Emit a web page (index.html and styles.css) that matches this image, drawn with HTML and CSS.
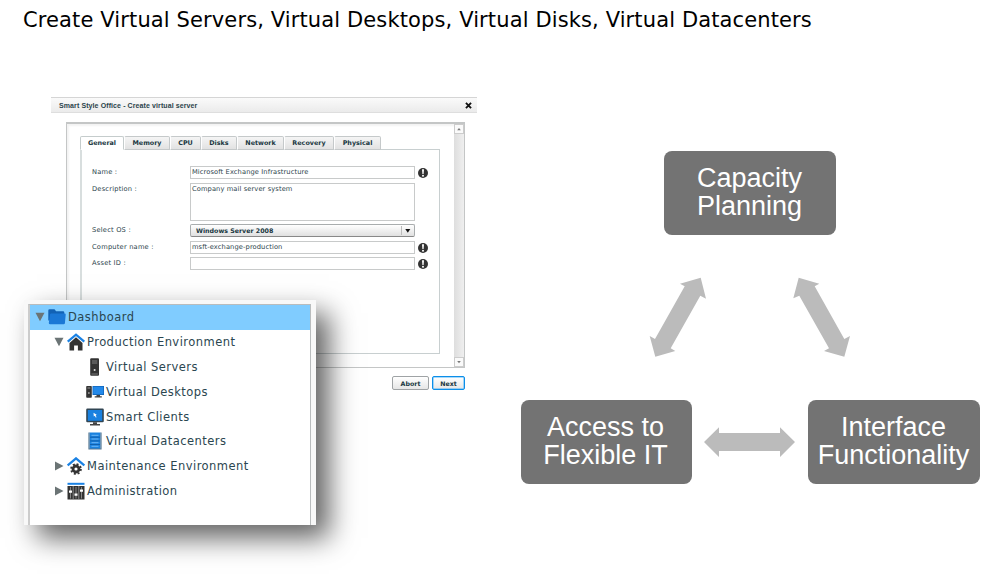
FILE: index.html
```html
<!DOCTYPE html>
<html lang="en">
<head>
<meta charset="utf-8">
<title>Create Virtual Servers</title>
<link rel="stylesheet" href="styles.css">
</head>
<body>
<main class="slide">
  <h1 class="headline">Create Virtual Servers, Virtual Desktops, Virtual Disks, Virtual Datacenters</h1>

  <section class="dialog">
    <header class="dialog-bar">
      <span class="dialog-title">Smart Style Office - Create virtual server</span>
      <svg class="close" viewBox="0 0 6 6"><path d="M.8.8 5.2 5.2M5.2.8.8 5.2"/></svg>
    </header>
    <div class="frame">
      <div class="content">
        <nav class="tabs">
          <span class="tab active t1">General</span><span class="tab t2">Memory</span><span class="tab t3">CPU</span><span class="tab t4">Disks</span><span class="tab t5">Network</span><span class="tab t6">Recovery</span><span class="tab t7">Physical</span>
        </nav>
        <div class="form">
          <label>Name :</label><div class="field">Microsoft Exchange Infrastructure</div>
          <svg class="alert" viewBox="0 0 10 10"><circle cx="5" cy="5" r="5"/><path d="M4 1.3h2L5.6 6H4.4z"/><circle class="dot" cx="5" cy="7.8" r="1"/></svg>
          <label>Description :</label><div class="field area">Company mail server system</div><i></i>
          <label>Select OS :</label><div class="select"><span>Windows Server 2008</span><svg class="caret" viewBox="0 0 13 11"><path class="sep" d="M.5 1v9"/><path d="M4.300 4h5L6.800 7.800z"/></svg></div><i></i>
          <label>Computer name :</label><div class="field">msft-exchange-production</div>
          <svg class="alert" viewBox="0 0 10 10"><circle cx="5" cy="5" r="5"/><path d="M4 1.3h2L5.6 6H4.4z"/><circle class="dot" cx="5" cy="7.8" r="1"/></svg>
          <label>Asset ID :</label><div class="field"></div>
          <svg class="alert" viewBox="0 0 10 10"><circle cx="5" cy="5" r="5"/><path d="M4 1.3h2L5.600 6H4.400z"/><circle class="dot" cx="5" cy="7.800" r="1"/></svg>
        </div>
      </div>
      <div class="scroll">
        <svg viewBox="1 1 8 8"><path d="M3.200 6.200h3.600L5 4z"/></svg>
        <svg viewBox="1 1 8 8"><path d="M3.200 4h3.600L5 6.200z"/></svg>
      </div>
    </div>
    <footer class="actions"><button class="btn">Abort</button><button class="btn primary">Next</button></footer>
  </section>

  <section class="tree">
    <ul class="list">
      <li class="row selected"><svg class="tw" viewBox="0 0 10 10"><path d="M.5.8h9L5 9.300z"/></svg>
        <svg class="ic" viewBox="0 0 18 18"><path d="M.3 2.500q0-1.300 1.200-1.300h5l1.600 2h7q1.200 0 1.200 1.200v8H.3z" fill="#1262b5"/><path d="M2 6.500q.2-1 1.200-1h13.500q1.200 0 1 1.200l-.8 8.500q-.1 1.100-1.300 1.100H2.200Q.7 16.300.8 15z" fill="#1b78d6"/></svg><span>Dashboard</span></li>
      <li class="row l1"><svg class="tw" viewBox="0 0 10 10"><path d="M.5.8h9L5 9.300z"/></svg>
        <svg class="ic" viewBox="0 0 18 18"><path d="M2.500 10 9 4.300 15.500 10v7.500h-4.600v-5H7.100v5H2.500z" fill="#333"/><path d="M.7 8.700 9 1.700l8.300 7" fill="none" stroke="#1b82e4" stroke-width="2.300"/></svg><span>Production Environment</span></li>
      <li class="row l2"><svg class="ic" viewBox="0 0 18 18"><rect x="4.200" y=".3" width="8.800" height="17.400" rx="1" fill="#333"/><path d="M6 3h5.300M6 5h5.300" stroke="#888" stroke-width=".9"/><circle cx="8.600" cy="12" r="1" fill="#ddd"/><path d="M5.500 16h6.300" stroke="#777"/></svg><span>Virtual Servers</span></li>
      <li class="row l2"><svg class="ic" viewBox="0 0 18 18"><rect x=".2" y="3" width="5.600" height="11.800" rx=".8" fill="#333"/><path d="M1.500 5h2.800" stroke="#999"/><circle cx="2.900" cy="10" r=".8" fill="#ddd"/><rect x="6.500" y="3" width="11.500" height="9" fill="#1268bd"/><rect x="7.300" y="3.800" width="9.900" height="7.300" fill="#2389ea"/><path d="M10.500 12h3.500v1.300h1.800v1.200H8.700v-1.200h1.800z" fill="#444"/></svg><span>Virtual Desktops</span></li>
      <li class="row l2"><svg class="ic" viewBox="0 0 18 18"><rect x=".2" y=".6" width="17.600" height="13.600" rx="1.200" fill="#314553"/><rect x="1.800" y="2" width="14.400" height="10.800" fill="#1981e0"/><path d="m7.500 4.800 3.200 2-1 .6.900 1.800-.9.400-.8-1.800-1.100.7z" fill="#fff"/><path d="M7 14.200h4v1.800h3v1.600H4V16h3z" fill="#444"/></svg><span>Smart Clients</span></li>
      <li class="row l2"><svg class="ic" viewBox="0 0 18 18"><path d="M3.500.500h11v16.500h-11z" fill="#1b82df"/><path d="M3 .5v17M15 .5v17M3 17h12" stroke="#567791" stroke-width="1.200"/><path d="M5.500 3.300h7M5.500 7h7M5.500 10.700h7M5.500 14.300h7" stroke="#6cb6f6"/><path d="M4 5.200h10M4 8.900h10M4 12.500h10" stroke="#0c58a2" stroke-width=".8"/></svg><span>Virtual Datacenters</span></li>
      <li class="row l1"><svg class="tw" viewBox="0 0 10 10"><path d="M1 .5v9l8.500-4.500z"/></svg>
        <svg class="ic" viewBox="0 0 18 18"><path d="M.7 8.500 9 1.400l8.300 7.100" fill="none" stroke="#1b82e4" stroke-width="2.300"/><circle cx="9" cy="12" r="3" fill="none" stroke="#333" stroke-width="2.800"/><circle cx="9" cy="12" r="4.900" fill="none" stroke="#333" stroke-width="1.800" stroke-dasharray="2 1.848"/></svg><span>Maintenance Environment</span></li>
      <li class="row l1"><svg class="tw" viewBox="0 0 10 10"><path d="M1 .5v9l8.500-4.500z"/></svg>
        <svg class="ic" viewBox="0 0 18 18"><path d="M.5 1.800h17" stroke="#1b82e4" stroke-width="2"/><path d="M.5 4h17v13.500H.5z" fill="#333"/><path d="M3.500 5v11.500M9 5v11.500M14.500 5v11.500M6.200 4v13M11.800 4v13" stroke="#aaa" stroke-width=".7"/><path d="M2 8.500h3v2.300H2zM7.500 11.500h3v2.300h-3zM13 7.500h3v2.300h-3z" fill="#fff"/></svg><span>Administration</span></li>
    </ul>
  </section>

  <svg class="arrows" viewBox="0 0 1001 574">
    <polygon points="700.700,277.700 706,298.700 700.300,295.700 670.700,348.300 675.300,351 655.300,356.700 649.700,336 655,339 684.700,286.300 680,283.700"/>
    <polygon points="798.700,277.700 819.300,283.700 814.700,286.300 844.300,339 850,336 844.300,356.700 824,351 829,348.300 799.300,295.700 793.300,298.300"/>
    <polygon points="704,442 719,427.300 719,433 780,433 780,427.300 795,442 780,457 780,451 719,451 719,457"/>
  </svg>
  <div class="node capacity">Capacity<br>Planning</div>
  <div class="node access">Access to<br>Flexible IT</div>
  <div class="node interface">Interface<br>Functionality</div>
</main>
</body>
</html>
```
FILE: styles.css
```css
* { box-sizing: border-box; }
body { margin: 0; background: #fff; }
.slide {
  position: relative;
  width: 1001px;
  height: 574px;
  overflow: hidden;
  font-family: "DejaVu Sans", sans-serif;
}
.headline {
  margin: 0;
  padding: 8px 0 0 23px;
  font-size: 21px;
  line-height: 25px;
  font-weight: 400;
  letter-spacing: .12px;
  white-space: nowrap;
  color: #000;
}

/* Server dialog */
.dialog {
  position: absolute;
  left: 51px;
  top: 97px;
  width: 426px;
  color: #2b434b;
  font-size: 6.7px;
  letter-spacing: .1px;
  white-space: nowrap;
}
.dialog-bar {
  display: flex;
  align-items: center;
  justify-content: space-between;
  height: 16px;
  padding: 0 5px 0 8px;
  border-top: 1px solid #d5d5d5;
  border-bottom: 1px solid #dedede;
  background: linear-gradient(#fafafa, #ebebeb);
}
.dialog-title { font: bold 7px "Liberation Sans", sans-serif; }
.close { width: 7px; height: 7px; stroke: #111; stroke-width: 1.6; fill: none; }
.frame {
  display: flex;
  justify-content: space-between;
  width: 399px;
  height: 246px;
  margin: 9px 0 0 15px;
  border: 1px solid #c4c6c6;
  border-top-width: 2px;
  background: #fff;
  box-shadow: inset 2px 2px 2px #f3f3f3;
}
.content { width: 360px; margin: 12px 0 0 13px; }
.tabs { display: flex; height: 14px; position: relative; }
.tab {
  display: flex;
  align-items: center;
  justify-content: center;
  height: 14px;
  border: 1px solid #c5c9ca;
  border-left-color: #fff;
  border-radius: 2px 2px 0 0;
  background: linear-gradient(#f5f5f5, #e2e2e2);
  font-size: 6.4px;
  letter-spacing: 0;
  font-weight: 700;
  color: #183640;
}
.tab.active { background: #fff; border-color: #c5cccc; border-bottom-color: #fff; }
.t1 { width: 44px; }
.t2 { width: 46px; }
.t3 { width: 31px; }
.t4 { width: 36px; }
.t5 { width: 47px; }
.t6 { width: 50px; }
.t7 { width: 47px; }
.form {
  display: grid;
  grid-template-columns: 95px 225px 10px;
  grid-template-rows: 13px 38px 13px 13px 13px;
  row-gap: 3.6px;
  column-gap: 3px;
  align-content: start;
  height: 205px;
  margin-top: -1px;
  padding: 16px 0 0 10px;
  border: 1px solid #c8cfd0;
  border-left: 2px solid #d8dede;
}
.form label { padding-top: 2px; line-height: 9px; letter-spacing: .2px; }
.field { border: 1px solid #c8caca; padding: 0 0 0 1px; line-height: 11px; }
.field.area { line-height: 11px; }
.select {
  display: flex;
  align-items: center;
  justify-content: space-between;
  padding-left: 5px;
  border: 1px solid #a9adae;
  border-bottom-color: #888;
  border-radius: 2px;
  background: linear-gradient(#fff, #e0e0e0);
  font-size: 6.3px;
  letter-spacing: 0;
  font-weight: 700;
  color: #183640;
}
.caret { width: 13px; height: 11px; fill: #111; }
.sep { stroke: #bbb; stroke-width: 1; }
.alert { width: 10px; height: 10px; margin: 2px 0 0 0; fill: #333; }
.alert path, .alert .dot { fill: #fff; }
.scroll {
  display: flex;
  flex-direction: column;
  justify-content: space-between;
  width: 10px;
  background: linear-gradient(90deg, #dedede, #efefef);
}
.scroll svg { width: 10px; height: 10px; background: #fafafa; border: 1px solid #ccc; fill: #777; }
.actions { display: flex; gap: 3px; justify-content: flex-end; padding: 8px 12px 0 0; }
.btn {
  height: 14px;
  width: 37px;
  padding: 0;
  border: 1px solid #9fa3a5;
  border-radius: 2px;
  background: linear-gradient(#fff, #e6e6e6);
  font: bold 6.3px "DejaVu Sans", sans-serif;
  color: #183640;
}
.btn.primary { width: 33px; border: 1px solid #0c8ee8; box-shadow: inset 0 0 0 .5px #4fb4f8; }

/* Navigation tree */
.tree {
  position: absolute;
  left: 24px;
  top: 300px;
  width: 292px;
  height: 225px;
  padding: 4px 5px 0 4px;
  background: #f8f8f8;
  box-shadow: 13px 13px 26px rgba(0, 0, 0, .62);
}
.list {
  height: 221px;
  margin: 0;
  padding: 0;
  list-style: none;
  border: 1px solid #b9bcbd;
  border-width: 1px 1px 0 2px;
  border-left-color: #ccc;
  background: #fff;
}
.row {
  display: flex;
  align-items: center;
  height: 24.8px;
  padding-left: 5px;
  font-size: 11.5px;
  letter-spacing: .46px;
  white-space: nowrap;
  color: #2b4650;
}
.row.selected { background: #80ccff; }
.l1 { padding-left: 24px; }
.l2 { padding-left: 56px; }
.tw { width: 10px; height: 10px; margin-right: 3px; fill: #6b7475; }
.ic { width: 18px; height: 18px; margin-right: 2px; }

/* Relationship diagram */
.arrows { position: absolute; left: 0; top: 0; width: 1001px; height: 574px; fill: #bbb; }
.node {
  position: absolute;
  display: flex;
  align-items: center;
  justify-content: center;
  width: 172px;
  height: 84px;
  padding: 0 1px 3px 0;
  border-radius: 8px;
  background: #737373;
  color: #fff;
  font: 27px/28px "Liberation Sans", sans-serif;
  text-align: center;
}
.capacity { left: 664px; top: 151px; }
.access { left: 521px; top: 400px; width: 171px; padding-right: 2px; }
.interface { left: 808px; top: 400px; }
```
